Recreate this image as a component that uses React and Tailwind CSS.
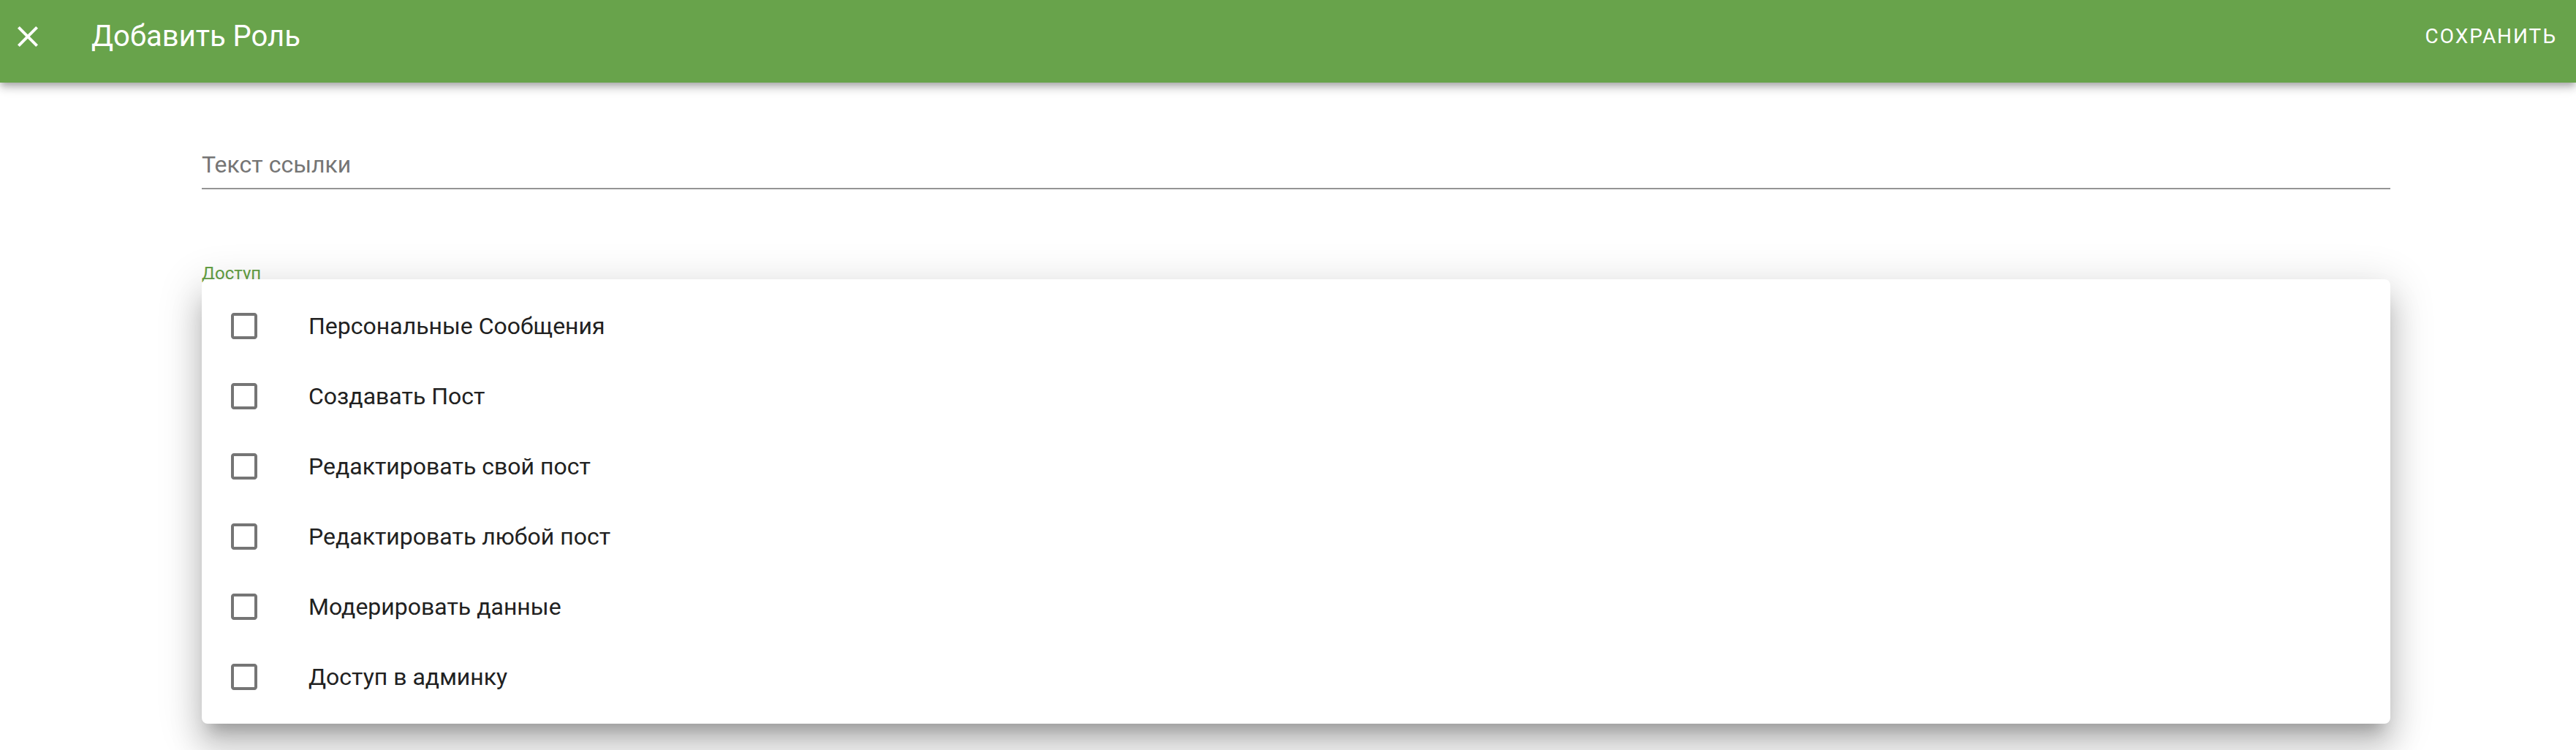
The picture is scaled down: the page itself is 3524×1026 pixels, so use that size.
import { useState } from 'react'

const permissions = [
  'Персональные Сообщения',
  'Создавать Пост',
  'Редактировать свой пост',
  'Редактировать любой пост',
  'Модерировать данные',
  'Доступ в админку',
]

const CloseIcon = () => (
  <svg className="w-12 h-12 text-white" viewBox="0 0 24 24" fill="currentColor">
    <path d="M19 6.41L17.59 5 12 10.59 6.41 5 5 6.41 10.59 12 5 17.59 6.41 19 12 13.41 17.59 19 19 17.59 13.41 12z" />
  </svg>
)

const BoxIcon = ({ checked }) => (
  <svg className={`w-12 h-12 ${checked ? 'text-[#68a34b]' : 'text-[#757575]'}`} viewBox="0 0 24 24" fill="currentColor">
    {checked ? (
      <path d="M19 3H5c-1.11 0-2 .9-2 2v14c0 1.1.89 2 2 2h14c1.11 0 2-.9 2-2V5c0-1.1-.89-2-2-2zm-9 14l-5-5 1.41-1.41L10 14.17l7.59-7.59L19 8l-9 9z" />
    ) : (
      <path d="M19 5v14H5V5h14m0-2H5c-1.11 0-2 .9-2 2v14c0 1.1.89 2 2 2h14c1.1 0 2-.9 2-2V5c0-1.1-.9-2-2-2z" />
    )}
  </svg>
)

const App = () => {
  const [checked, setChecked] = useState({})

  const toggle = (name) => {
    setChecked({ ...checked, [name]: !checked[name] })
  }

  return (
    <div className="min-h-screen bg-white font-['Roboto',sans-serif]">
      {/* App bar */}
      <header className="relative z-20 h-[113px] pb-[13px] pl-[14px] pr-[26px] flex items-center bg-[#68a34b] shadow-[0_4px_8px_-2px_rgba(0,0,0,0.2),0_8px_10px_0_rgba(0,0,0,0.14),0_2px_20px_0_rgba(0,0,0,0.12)]">
        <button className="flex items-center justify-center">
          <CloseIcon />
        </button>
        <h1 className="ml-[63px] text-[40px] leading-[48px] font-normal text-white">Добавить Роль</h1>
        <button className="ml-auto text-[28px] leading-[36px] font-normal tracking-[0.07em] text-white uppercase">
          Сохранить
        </button>
      </header>

      <main className="pl-[276px] pr-[254px]">
        {/* Text field */}
        <div className="mt-[93px]">
          <label className="block text-[32px] leading-[38px] text-[#757575]">Текст ссылки</label>
          <div className="mt-[13px] h-[2px] bg-[#949494]"></div>
        </div>

        {/* Access select */}
        <div className="mt-[103px]">
          <span className="block text-[24px] leading-[24px] text-[#64a044]">Доступ</span>
          <div className="relative z-10 -mt-[4px] py-[16px] bg-white rounded-[8px] shadow-[0_20px_20px_-12px_rgba(0,0,0,0.22),0_32px_40px_4px_rgba(0,0,0,0.15),0_12px_56px_10px_rgba(0,0,0,0.12)]">
            {permissions.map((name) => (
              <div
                key={name}
                onClick={() => toggle(name)}
                className="h-[96px] pl-[34px] flex items-center cursor-pointer"
              >
                <BoxIcon checked={checked[name]} />
                <span className="ml-[64px] text-[32px] leading-[40px] text-[#212121]">{name}</span>
              </div>
            ))}
          </div>
        </div>
      </main>
    </div>
  )
}

export default App
